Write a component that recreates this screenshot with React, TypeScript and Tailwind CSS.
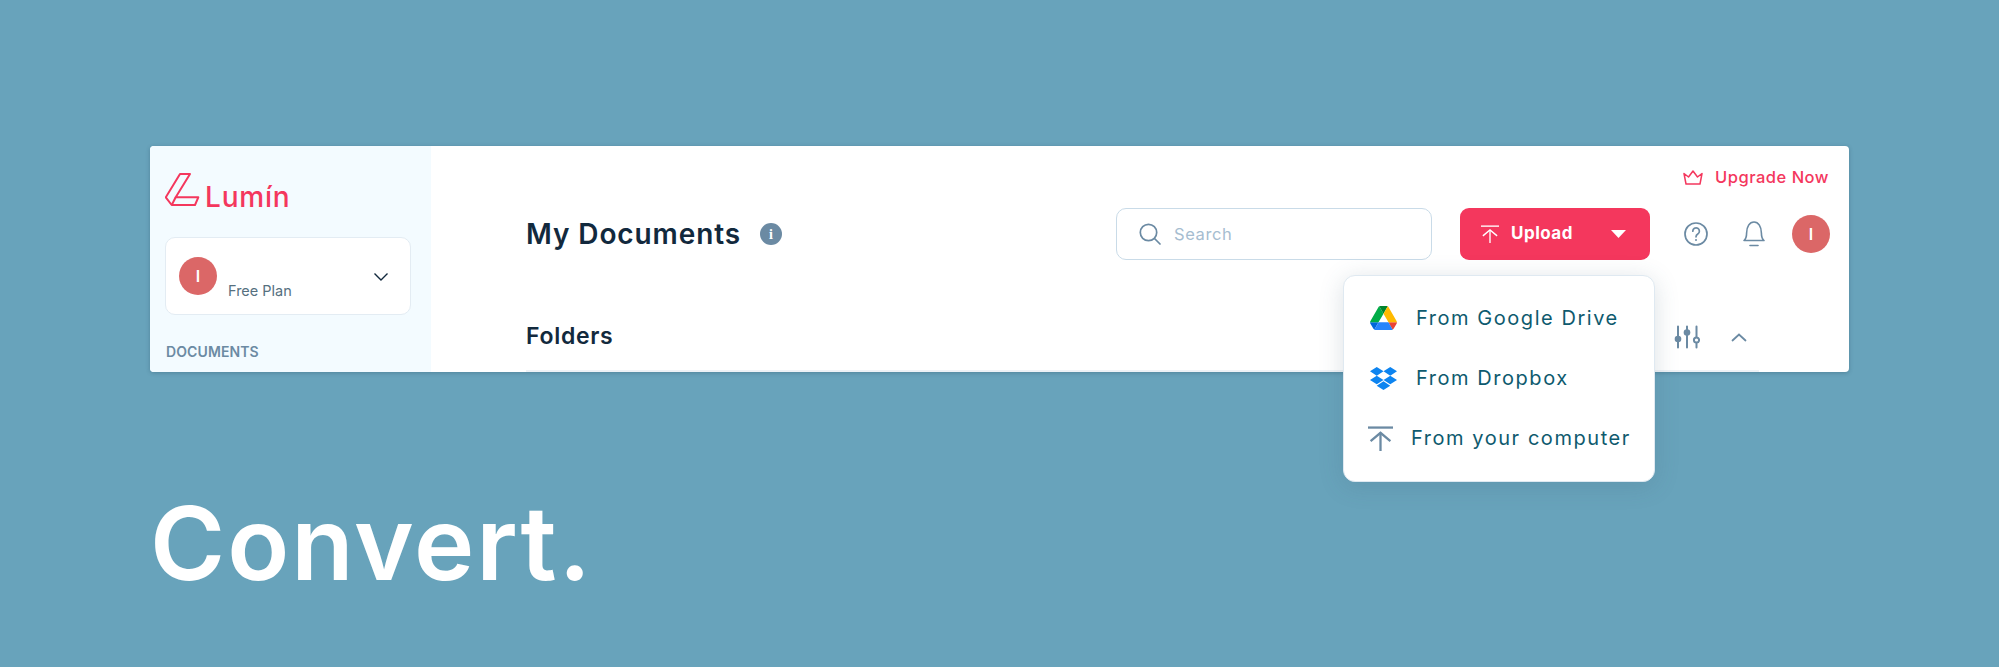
import React from "react";
import { FaDropbox } from "react-icons/fa";

const FONT = "font-['Inter',sans-serif]";

// Lumin mark: slanted stem folded into a foot
const LogoMark = () => (
  <svg width="35" height="34" viewBox="0 0 35 34" fill="none" stroke="#f4375d" strokeWidth="2" strokeLinejoin="round">
    <path d="M15 1H25L10.7 24.3H33.3L30 32H6.7L.8 24.3Z" />
    <path d="M10.7 24.3 6.7 32" />
  </svg>
);

const Avatar = () => (
  <div className="w-[38px] h-[38px] shrink-0 rounded-full bg-[#db6767] flex items-center justify-center text-white text-[16px] font-semibold">
    I
  </div>
);

const UploadArrow = ({ size, color, width = 2 }: { size: number; color: string; width?: number }) => (
  <svg width={size} height={size} viewBox="0 0 24 24" fill="none" stroke={color} strokeWidth={width}>
    <path d="M0 1.5H24" />
    <path d="M12 24V6.5" />
    <path d="M2.5 14.5 12 6.5l9.5 8" />
  </svg>
);

const GoogleDrive = () => (
  <svg width="27" height="24" viewBox="0 0 87.3 78">
    <path d="m6.6 66.85 3.85 6.65c.8 1.4 1.95 2.5 3.3 3.3l13.75-23.8h-27.5c0 1.55.4 3.1 1.2 4.5z" fill="#0066da" />
    <path d="m43.65 25-13.75-23.8c-1.35.8-2.5 1.9-3.3 3.3l-25.4 44a9.06 9.06 0 0 0 -1.2 4.5h27.5z" fill="#00ac47" />
    <path d="m73.55 76.8c1.35-.8 2.5-1.9 3.3-3.3l1.6-2.75 7.65-13.25c.8-1.4 1.2-2.95 1.2-4.5h-27.502l5.852 11.5z" fill="#ea4335" />
    <path d="m43.65 25 13.75-23.8c-1.35-.8-2.9-1.2-4.5-1.2h-18.5c-1.6 0-3.15.45-4.5 1.2z" fill="#00832d" />
    <path d="m59.8 53h-32.3l-13.75 23.8c1.35.8 2.9 1.2 4.5 1.2h50.8c1.6 0 3.15-.45 4.5-1.2z" fill="#2684fc" />
    <path d="m73.4 26.5-12.7-22c-.8-1.4-1.95-2.5-3.3-3.3l-13.75 23.8 16.15 28h27.45c0-1.55-.4-3.1-1.2-4.5z" fill="#ffba00" />
  </svg>
);

const Sidebar = () => (
  <aside className="w-[281px] shrink-0 bg-[#f3fbff] rounded-l-[4px] pl-[15px] pr-5 pt-[27px]">
    <div className="flex items-end gap-[5px] h-[34px]">
      <LogoMark />
      <span className={`${FONT} text-[#f4375d] text-[28px] leading-[20px] font-medium tracking-[0.8px]`}>Lumín</span>
    </div>
    <div className="mt-[30px] h-[78px] bg-white border border-[#e3ecf3] rounded-[10px] flex items-start pl-[13px] pr-[21px] pt-[19px]">
      <Avatar />
      <span className={`${FONT} ml-[11px] mt-[25px] text-[#56707f] text-[14.5px] leading-[18px]`}>Free Plan</span>
      <svg className="ml-auto mt-[15px]" width="16" height="10" viewBox="0 0 16 10" fill="none" stroke="#12293d" strokeWidth="1.4">
        <path d="M1.5 1.5 8 8l6.5-6.5" />
      </svg>
    </div>
    <div className={`${FONT} mt-[28px] pl-px text-[#6b8aa3] text-[14px] leading-[18px] font-semibold tracking-[0.1px]`}>DOCUMENTS</div>
  </aside>
);

const UploadMenu = () => (
  <div className={`${FONT} absolute z-10 top-[67px] right-[-5px] w-[312px] h-[207px] bg-white border border-[#dfe9f1] rounded-[12px] shadow-[0_4px_24px_rgba(60,90,110,0.18)] text-[#0e5a6e] text-[20px] tracking-[1.55px] pt-[12px]`}>
    <div className="h-[60px] flex items-center pl-[26px] gap-[19px]">
      <GoogleDrive />
      <span>From Google Drive</span>
    </div>
    <div className="h-[60px] flex items-center pl-[26px] gap-[19px]">
      <FaDropbox className="w-[27px] h-[27px] text-[#0d84f0]" />
      <span>From Dropbox</span>
    </div>
    <div className="h-[60px] flex items-center pl-[24px] gap-[18px]">
      <UploadArrow size={25} color="#6b8aa3" width={2.2} />
      <span>From your computer</span>
    </div>
  </div>
);

const Header = () => (
  <div className="flex items-center mt-[20px] h-[52px] pl-[95px]">
    <h1 className={`${FONT} text-[#12293d] text-[28px] font-semibold tracking-[0.9px]`}>My Documents</h1>
    <div className="ml-[19px] w-[22px] h-[22px] rounded-full bg-[#6b8aa3] flex items-center justify-center text-white text-[14px] font-bold font-['Liberation_Serif',serif]">
      i
    </div>
    <div className="ml-auto w-[316px] h-[52px] border border-[#c9dbe8] rounded-[10px] flex items-center pl-[22px] gap-[13px]">
      <svg width="22" height="22" viewBox="0 0 22 22" fill="none" stroke="#6b8aa3" strokeWidth="1.7">
        <circle cx="9.5" cy="9.5" r="8.2" />
        <path d="m15.5 15.5 5.5 5.5" strokeLinecap="round" />
      </svg>
      <span className={`${FONT} text-[#a6bdd0] text-[16.5px] tracking-[0.6px]`}>Search</span>
    </div>
    <div className="relative ml-[28px]">
      <button className="w-[190px] h-[52px] bg-[#f4375d] rounded-[9px] flex items-center pl-[21px] pr-[24px] text-white">
        <UploadArrow size={18} color="#ffffff" width={1.8} />
        <span className={`${FONT} ml-3 text-[17px] font-bold tracking-[0.5px]`}>Upload</span>
        <svg className="ml-auto" width="15" height="8" viewBox="0 0 15 8" fill="#ffffff">
          <path d="M0 0H15L7.5 8Z" />
        </svg>
      </button>
      <UploadMenu />
    </div>
    <svg className="ml-[34px]" width="24" height="24" viewBox="0 0 24 24" fill="none" stroke="#6b8aa3" strokeWidth="1.7">
      <circle cx="12" cy="12" r="11" />
      <path d="M8.8 9.2a3.3 3.3 0 1 1 5 2.8c-1.2.8-1.8 1.4-1.8 2.8" strokeLinecap="round" />
      <circle cx="12" cy="18" r="1" fill="#6b8aa3" stroke="none" />
    </svg>
    <svg className="ml-[35px]" width="22" height="26" viewBox="0 0 22 26" fill="none" stroke="#6b8aa3" strokeWidth="1.6">
      <path d="M1 19.5c2-1.6 2.6-3.8 2.6-7.5C3.6 5.6 6.6 1 11 1s7.4 4.6 7.4 11c0 3.7.6 5.9 2.6 7.5Z" strokeLinejoin="round" />
      <path d="M7 24.5h8" strokeLinecap="round" />
    </svg>
    <div className="ml-[27px]">
      <Avatar />
    </div>
  </div>
);

const FoldersRow = () => (
  <div className="ml-[95px] mr-[71px] mt-[34px] h-[78px] border-b-2 border-[#eef2f6] flex items-start pr-[12px] pt-[25px]">
    <h2 className={`${FONT} text-[#12293d] text-[23px] leading-[34px] font-semibold tracking-[0.7px]`}>Folders</h2>
    <svg className="ml-auto mt-[6px]" width="26" height="24" viewBox="0 0 26 24" fill="none" stroke="#6b8aa3" strokeWidth="2" strokeLinecap="round">
      <path d="M4 1.5v21M13 1.5v21M22.5 1.5v21" />
      <circle cx="4" cy="14" r="3.3" fill="#6b8aa3" stroke="none" />
      <circle cx="13" cy="7.5" r="3.3" fill="#6b8aa3" stroke="none" />
      <circle cx="22.5" cy="15" r="2.6" fill="#ffffff" />
    </svg>
    <svg className="ml-[31px] mt-[14px]" width="16" height="9" viewBox="0 0 16 9" fill="none" stroke="#6b8aa3" strokeWidth="1.8" strokeLinecap="round">
      <path d="M1.5 7.5 8 1.5l6.5 6" />
    </svg>
  </div>
);

export default function App() {
  return (
    <div className={`min-h-screen bg-[#68a3bb] px-[150px] pt-[146px] ${FONT}`}>
      <div className="flex h-[226px] bg-white rounded-[4px] shadow-[0_1px_4px_rgba(30,60,80,0.3)]">
        <Sidebar />
        <main className="flex-1 min-w-0 pr-[19px] pt-[20px]">
          <div className="flex justify-end items-center h-[22px] gap-[12px] pr-px">
            <svg width="20" height="15" viewBox="0 0 20 15" fill="none" stroke="#f4375d" strokeWidth="1.5" strokeLinejoin="round">
              <path d="M1 3.5 5.5 7 10 1l4.5 6L19 3.5 17 14H3Z" />
            </svg>
            <span className={`${FONT} text-[#f4375d] text-[16.5px] font-medium tracking-[0.5px]`}>Upgrade Now</span>
          </div>
          <Header />
          <FoldersRow />
        </main>
      </div>
      <div className="mt-[111px] text-white text-[102px] leading-[120px] font-semibold tracking-[2px]">Convert.</div>
    </div>
  );
}
